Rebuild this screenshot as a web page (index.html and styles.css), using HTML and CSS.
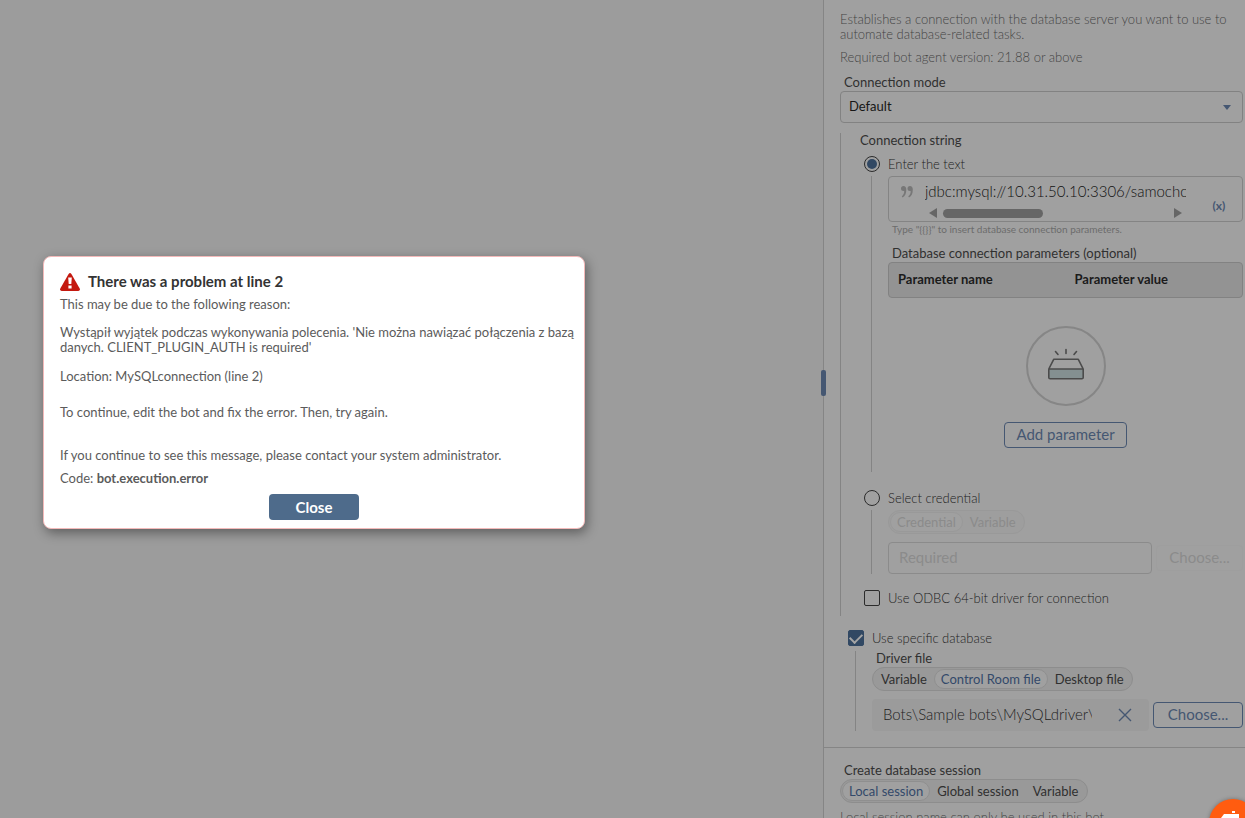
FILE: index.html
```
<!DOCTYPE html>
<html lang="en">

<head>
  <meta charset="utf-8" />
  <meta name="viewport" content="width=device-width, initial-scale=1" />
  <title>Edit bot</title>
  <link rel="stylesheet" href="styles.css">
</head>

<body>
  <div class="editor">
    <main class="canvas"></main>

    <aside class="panel">
      <span class="resizer"></span>

      <section class="section">
        <p class="about">Establishes a connection with the database server you want to use to automate database-related tasks.</p>
        <p class="about">Required bot agent version: 21.88 or above</p>

        <label class="label" for="mode">Connection mode</label>
        <div class="dropdown">
          <select id="mode">
            <option>Default</option>
          </select>
          <svg width="8" height="5" viewBox="0 0 8 5"><path d="M0 0h8L4 5z" fill="#455772" /></svg>
        </div>

        <div class="group">
          <h3 class="group-title">Connection string</h3>

          <label class="choice"><input type="radio" name="source" checked />Enter the text</label>
          <div class="branch branch-text">
            <div class="textbox">
              <svg class="quote" width="12" height="12" viewBox="0 0 12 12">
                <path d="M2.500 0A2.500 2.500 0 0 0 2.500 5H3.200C3.200 7.500 2.500 9 .8 10.200L1.500 11.500C4.200 10 5.300 7.500 5.300 3.500C5.300 1.200 4.200 0 2.500 0zM9 0A2.500 2.500 0 0 0 9 5H9.700C9.700 7.500 9 9 7.300 10.200L8 11.500C10.700 10 11.800 7.500 11.800 3.500C11.800 1.200 10.700 0 9 0z" fill="#777" />
              </svg>
              <div class="textbox-body">
                <input type="text" aria-label="Connection string" value="jdbc:mysql://10.31.50.10:3306/samochody" />
                <div class="scrollbar">
                  <svg width="8" height="10" viewBox="0 0 8 10"><path d="M8 0v10L0 5z" fill="#666" /></svg>
                  <span class="thumb"></span>
                  <svg width="8" height="10" viewBox="0 0 8 10"><path d="M0 0v10l8-5z" fill="#666" /></svg>
                </div>
              </div>
              <button type="button" class="insert">(x)</button>
            </div>
            <p class="hint">Type "{{}}" to insert database connection parameters.</p>

            <h3 class="label">Database connection parameters (optional)</h3>
            <table class="params">
              <thead>
                <tr>
                  <th>Parameter name</th>
                  <th>Parameter value</th>
                </tr>
              </thead>
            </table>
            <div class="empty">
              <svg width="80" height="80" viewBox="0 0 80 80" fill="none">
                <circle cx="40" cy="40" r="39" stroke="#868686" stroke-width="2" />
                <path d="M23 43h34v9.500H23z" fill="#849091" />
                <path d="M22.800 43v8.500q0 1.300 1.300 1.300h31.800q1.300 0 1.300-1.300V43zL27.700 33.300h24.600L57.200 43M40 23.500v4M29.500 25.500l2.500 3M50.500 25.500l-2.500 3" stroke="#4b4b4b" stroke-width="1.600" stroke-linejoin="round" stroke-linecap="round" />
              </svg>
              <button type="button" class="btn btn-add">Add parameter</button>
            </div>
          </div>

          <label class="choice"><input type="radio" name="source" />Select credential</label>
          <div class="branch branch-credential">
            <div class="tabs tabs-off">
              <button type="button" class="tab active" disabled>Credential</button>
              <button type="button" class="tab" disabled>Variable</button>
            </div>
            <div class="picker">
              <input type="text" class="required" aria-label="Credential" placeholder="Required" disabled />
              <button type="button" class="btn btn-choose" disabled>Choose...</button>
            </div>
          </div>

          <label class="choice choice-odbc"><input type="checkbox" />Use ODBC 64-bit driver for connection</label>
        </div>

        <label class="choice choice-specific"><input type="checkbox" checked />Use specific database</label>
        <div class="branch branch-driver">
          <h3 class="label">Driver file</h3>
          <div class="tabs">
            <button type="button" class="tab">Variable</button>
            <button type="button" class="tab active">Control Room file</button>
            <button type="button" class="tab">Desktop file</button>
          </div>
          <div class="picker">
            <div class="file">
              <input type="text" aria-label="Driver file" value="Bots\Sample bots\MySQLdriver\mysql.jar" readonly />
              <button type="button" class="clear" aria-label="Clear">
                <svg width="14" height="14" viewBox="0 0 14 14"><path d="M1 1l12 12M13 1L1 13" stroke="#455772" stroke-width="1.400" /></svg>
              </button>
            </div>
            <button type="button" class="btn btn-choose">Choose...</button>
          </div>
        </div>
      </section>

      <section class="section section-session">
        <h3 class="label">Create database session</h3>
        <div class="tabs">
          <button type="button" class="tab active">Local session</button>
          <button type="button" class="tab">Global session</button>
          <button type="button" class="tab">Variable</button>
        </div>
        <p class="about">Local session name can only be used in this bot.</p>
      </section>
    </aside>
  </div>

  <div class="dialog" role="alertdialog" aria-labelledby="dialog-title">
    <header>
      <svg width="20" height="18" viewBox="0 0 20 18">
        <path d="M8.600.9Q10-.9 11.400.9L19.700 15.500Q20.500 17.800 18.300 18H1.700Q-.5 17.800.3 15.500z" fill="#c4190f" />
        <path d="M8.200 4.500h3.600l-.5 6.500H8.700zM8.400 12.600h3.200v3h-3.200z" fill="#fff" />
      </svg>
      <h2 id="dialog-title">There was a problem at line 2</h2>
    </header>
    <p>This may be due to the following reason:</p>
    <p class="reason">Wystąpił wyjątek podczas wykonywania polecenia. 'Nie można nawiązać połączenia z bazą danych. CLIENT_PLUGIN_AUTH is required'</p>
    <p class="location">Location: MySQLconnection (line 2)</p>
    <p class="advice">To continue, edit the bot and fix the error. Then, try again.</p>
    <p class="contact">If you continue to see this message, please contact your system administrator.</p>
    <p class="code">Code: <b>bot.execution.error</b></p>
    <button type="button" class="close">Close</button>
  </div>

  <button type="button" class="help" aria-label="Help">
    <svg width="48" height="48" viewBox="0 0 48 48" fill="#fff">
      <path d="M23 12h3v2h-3zM15 15h15v5h4v10H12V19z" />
    </svg>
  </button>
</body>

</html>
```

FILE: styles.css
```
* {
  box-sizing: border-box;
}

body {
  margin: 0;
  height: 100vh;
  overflow: hidden;
  font-family: Lato, sans-serif;
  font-size: 13px;
  line-height: 15px;
  color: #303030;
  background: #9c9c9c;
}

p, h2, h3 {
  margin: 0;
  font-size: 13px;
  font-weight: normal;
}

button, input, select {
  font-family: inherit;
  color: inherit;
  margin: 0;
}

button {
  padding: 0;
  border: 0;
  background: none;
}

.editor {
  display: flex;
  height: 100%;
}

.canvas {
  flex: 1;
}

/* side panel */
.panel {
  position: relative;
  flex: 0 0 422px;
  height: 100%;
  border-left: 1px solid #858585;
  background: #a0a0a0;
}

.resizer {
  position: absolute;
  top: 370px;
  left: -3px;
  width: 5px;
  height: 26px;
  border-radius: 2px;
  background: #455772;
}

.section {
  padding: 12px 2px 16px 16px;
}

.about {
  margin-bottom: 8px;
  padding-right: 8px;
  font-weight: 300;
  color: #444;
}

.label {
  display: block;
  padding-left: 4px;
}

.about + .label {
  margin: 10px 0 1px;
}

.dropdown {
  display: grid;
  align-items: center;
}

.dropdown select, .dropdown svg {
  grid-area: 1 / 1;
}

.dropdown svg {
  justify-self: end;
  margin-right: 12px;
  pointer-events: none;
}

.dropdown select {
  appearance: none;
  width: 100%;
  height: 32px;
  padding: 0 8px 2px;
  border: 1px solid #828282;
  border-radius: 4px;
  font-size: 13px;
  background: none;
  color: #161616;
}

.group {
  margin-top: 10px;
  padding: 0 0 10px 19px;
  border-left: 1px solid #848484;
}

.choice {
  display: flex;
  align-items: center;
  gap: 8px;
  height: 16px;
  margin-left: 4px;
  font-weight: 300;
  color: #222;
}

.choice input {
  appearance: none;
  display: grid;
  place-items: center;
  width: 16px;
  height: 16px;
  border: 1px solid #2b2b2b;
  border-radius: 2px;
}

.choice input[type="radio"] {
  border-radius: 50%;
}

.choice input[type="radio"]:checked::before {
  content: "";
  width: 10px;
  height: 10px;
  border-radius: 50%;
  background: #314863;
}

.choice input[type="checkbox"]:checked {
  border-color: #314863;
  background: #314863;
}

.choice input[type="checkbox"]:checked::before {
  content: "";
  width: 10px;
  height: 6px;
  margin-bottom: 3px;
  border: solid #a5a5a5;
  border-width: 0 0 2px 2px;
  transform: rotate(-45deg);
}

.group-title + .choice {
  margin-top: 8px;
}

.branch {
  margin: 4px 0 0 11px;
  padding-left: 16px;
  border-left: 1px solid #848484;
}

.branch-text {
  height: 296px;
  margin-bottom: 18px;
}

.textbox {
  display: flex;
  height: 46px;
  padding: 0 12px;
  border: 1px solid #848484;
  border-radius: 4px;
}

.quote {
  margin: 9px 12px 0 0;
}

.textbox-body {
  flex: 1;
  min-width: 0;
  margin-right: 22px;
}

.textbox input {
  display: block;
  width: 100%;
  height: 31px;
  padding: 0 0 4px;
  border: 0;
  font-size: 15px;
  font-weight: 300;
  background: none;
  color: #111;
}

.scrollbar {
  display: flex;
  align-items: center;
  gap: 6px;
  padding: 0 4px;
}

.scrollbar svg:last-child {
  margin-left: auto;
}

.thumb {
  width: 100px;
  height: 9px;
  border-radius: 5px;
  background: #666;
}

.insert {
  width: 22px;
  padding-top: 12px;
  font-size: 12px;
  font-weight: bold;
  color: #455772;
}

.hint {
  padding-left: 4px;
  margin-bottom: 9px;
  font-size: 10px;
  color: #6c6c6c;
}

.params {
  width: 100%;
  height: 36px;
  margin-top: 1px;
  border: 1px solid #828282;
  border-radius: 4px;
  border-spacing: 0;
  table-layout: fixed;
  background: #939393;
}

.params th {
  padding: 0 9px 2px;
  text-align: left;
  color: #1b1b1b;
}

.empty {
  display: flex;
  flex-direction: column;
  align-items: center;
  gap: 16px;
  margin-top: 28px;
}

.btn {
  height: 26px;
  padding: 0 11px 2px;
  border: 1px solid #455772;
  border-radius: 4px;
  font-size: 15px;
  color: #455772;
}

.btn:disabled {
  border-color: #9e9e9e;
  color: #8b8b8b;
}

.btn-choose {
  flex: 0 0 90px;
}

.btn-choose:disabled {
  flex-basis: 87px;
}

.tabs {
  display: flex;
  width: fit-content;
  height: 24px;
  padding: 1px;
  border: 1px solid #8d8d8d;
  border-radius: 12px;
  background: #999;
}

.tab {
  padding: 0 6px 1px;
  border: 1px solid transparent;
  border-radius: 10px;
  font-size: 13px;
}

.tab.active {
  border-color: #8f8f8f;
  background: #a0a0a0;
  color: #33496a;
}

.tabs-off {
  border-color: #999;
  background: #9e9e9e;
}

.tabs-off .tab, .tabs-off .tab.active {
  border-color: transparent;
  color: #8b8b8b;
}

.tabs-off .tab.active {
  border-color: #999;
}

.picker {
  display: flex;
  align-items: center;
  gap: 4px;
  margin-top: 8px;
}

.required {
  flex: 1;
  min-width: 0;
  height: 32px;
  padding: 0 10px 2px;
  border: 1px solid #8b8b8b;
  border-radius: 4px;
  font-size: 15px;
  background: none;
}

.required::placeholder {
  color: #8b8b8b;
}

.choice-odbc {
  margin-top: 16px;
}

.choice-specific {
  margin: 14px 0 0 8px;
}

.branch-driver {
  margin: 5px 0 0 15px;
}

.branch-driver .tabs, .section-session .tabs {
  margin-top: 1px;
}

.file {
  flex: 1;
  min-width: 0;
  display: flex;
  align-items: center;
  gap: 26px;
  height: 32px;
  padding: 0 17px 0 11px;
  border-radius: 4px;
  background: #9b9b9b;
}

.file input {
  flex: 1;
  min-width: 0;
  padding: 0 0 2px;
  border: 0;
  font-size: 15px;
  font-weight: 300;
  background: none;
  color: #222;
}

.clear {
  display: flex;
}

.section-session {
  padding-top: 15px;
  border-top: 1px solid #858585;
}

.section-session .about {
  margin-top: 7px;
}

/* error dialog */
.dialog {
  position: absolute;
  top: 256px;
  left: 43px;
  width: 542px;
  padding: 16px 16px 8px;
  border: 1px solid #f3b9b9;
  border-radius: 8px;
  background: #fff;
  box-shadow: 2px 4px 12px rgba(0, 0, 0, .4);
  color: #5b5b5b;
}

.dialog header {
  display: flex;
  align-items: center;
  gap: 8px;
  height: 18px;
  margin-bottom: 6px;
}

.dialog h2 {
  padding-bottom: 2px;
  font-size: 15px;
  font-weight: bold;
  color: #333;
}

.reason {
  margin: 13px -12px 0 0;
}

.location {
  margin-top: 14px;
}

.advice {
  margin-top: 21px;
}

.contact {
  margin-top: 28px;
}

.code {
  margin-top: 8px;
}

.close {
  display: block;
  width: 90px;
  height: 26px;
  margin: 8px auto 0;
  border-radius: 4px;
  font-size: 15px;
  font-weight: bold;
  background: #4e6b8b;
  color: #fff;
}

.help {
  position: fixed;
  right: -12px;
  bottom: -29px;
  width: 48px;
  height: 48px;
  border-radius: 50%;
  background: #ff5c10;
  box-shadow: 0 0 4px rgba(0, 0, 0, .3);
}
```
